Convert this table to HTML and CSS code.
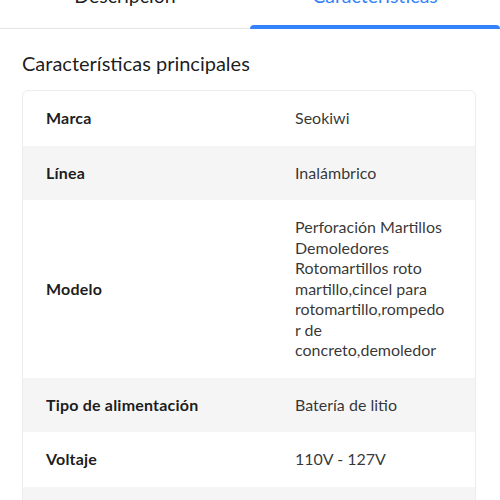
FILE: index.html
```html
<!DOCTYPE html>
<html lang="es">
<head>
<meta charset="utf-8">
<link rel="stylesheet" href="styles.css">
</head>
<body>
<nav class="tabs">
  <div class="tab">Descripción</div>
  <div class="tab active">Características</div>
</nav>
<section class="specs">
  <h2 class="title">Características principales</h2>
  <div class="table">
    <div class="row"><div class="key">Marca</div><div class="val">Seokiwi</div></div>
    <div class="row alt"><div class="key">Línea</div><div class="val">Inalámbrico</div></div>
    <div class="row"><div class="key">Modelo</div><div class="val">Perforación Martillos Demoledores Rotomartillos roto martillo,cincel para rotomartillo,rompedor de concreto,demoledor</div></div>
    <div class="row alt"><div class="key">Tipo de alimentación</div><div class="val">Batería de litio</div></div>
    <div class="row"><div class="key">Voltaje</div><div class="val">110V - 127V</div></div>
    <div class="row alt"><div class="key">&nbsp;</div><div class="val">&nbsp;</div></div>
  </div>
</section>
</body>
</html>
```
FILE: styles.css
```css
html, body {
  margin: 0;
  padding: 0;
  background: #fff;
  font-family: "Lato", "Open Sans", sans-serif;
  color: rgba(0,0,0,.9);
  overflow: hidden;
  height: 500px;
}
.tabs {
  display: flex;
  margin-top: -16px;
  border-bottom: 1px solid #e6e6e6;
}
.tab {
  flex: 1;
  text-align: center;
  font-size: 19.5px;
  line-height: 24px;
  padding-bottom: 20px;
  position: relative;
}
.tab.active {
  color: #3483fa;
}
.tab.active::after {
  content: "";
  position: absolute;
  left: 0;
  right: 0;
  bottom: -1px;
  height: 4px;
  background: #3483fa;
  border-radius: 4px 4px 0 0;
}
.specs {
  padding: 0 24px 0 22px;
}
.title {
  margin: 22px 0 15px;
  font-size: 20px;
  line-height: 24px;
  font-weight: 400;
}
.table {
  border: 1px solid #ececec;
  border-radius: 6px;
  overflow: hidden;
  font-size: 16px;
  line-height: 20.5px;
}
.row {
  display: grid;
  grid-template-columns: 272px 1fr;
  align-items: center;
}
.row.alt {
  background: #f5f5f5;
}
.key, .val {
  padding: 17px 24px 17px 23px;
}
.key {
  font-weight: 700;
  letter-spacing: 0.2px;
}
.val {
  padding-left: 0;
  padding-right: 28px;
  overflow-wrap: anywhere;
  color: rgba(0,0,0,.8);
}
```
